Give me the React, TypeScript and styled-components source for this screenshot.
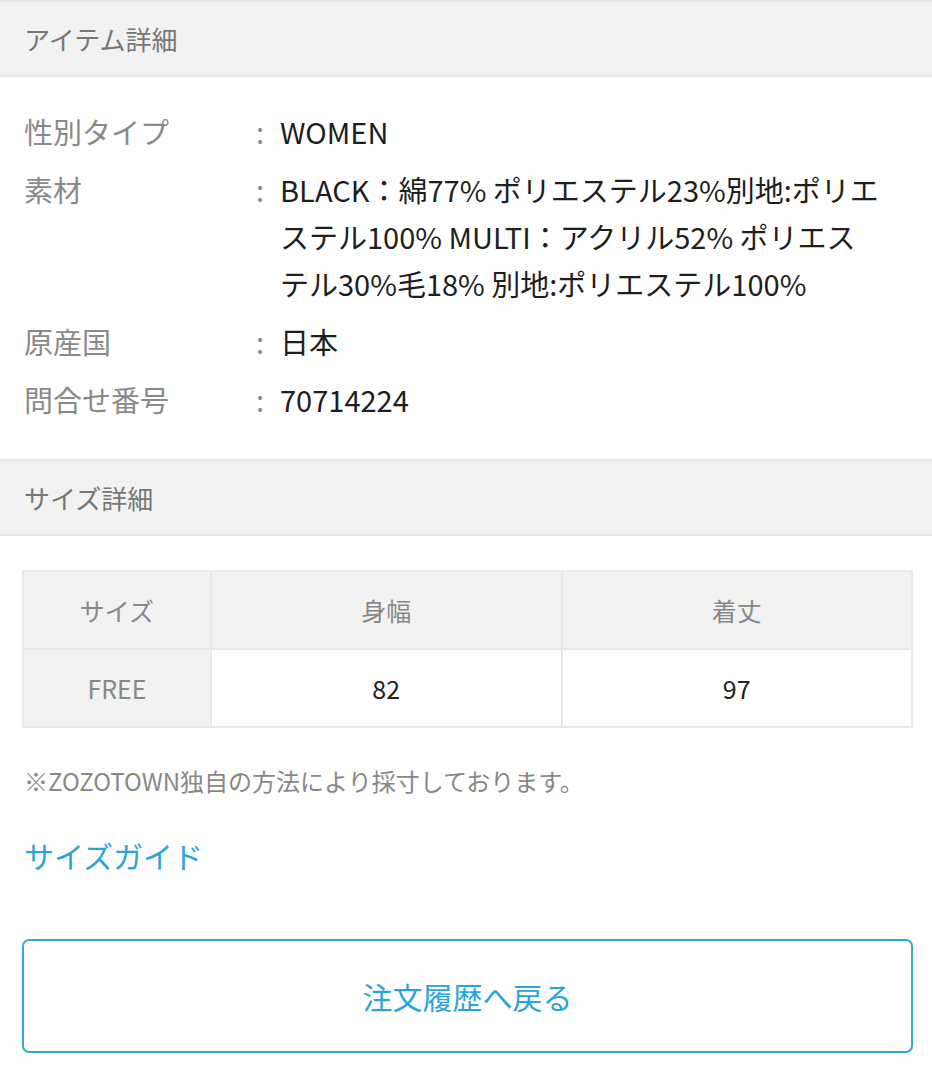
import React from "react";
import styled, { createGlobalStyle } from "styled-components";

const GlobalStyle = createGlobalStyle`
  body {
    margin: 0;
    background: #fff;
    font-family: "Noto Sans CJK JP", "Noto Sans", sans-serif;
  }
`;

const Page = styled.div`
  width: 932px;
  background: #fff;
`;

const SectionHead = styled.div`
  height: 77px;
  box-sizing: border-box;
  background: #f2f2f2;
  border-top: 2px solid #e6e6e6;
  border-bottom: 2px solid #e6e6e6;
  padding: 0 24px;
  display: flex;
  align-items: center;
  font-size: 26px;
  color: #777;
`;

const SpecList = styled.dl`
  margin: 0;
  padding: 31px 22px 36px 24px;
  display: grid;
  grid-template-columns: 232px 1fr;
  row-gap: 11px;
  font-size: 29px;
  line-height: 47px;
`;

const Label = styled.dt`
  color: #8a8a8a;
`;

const Value = styled.dd`
  margin: 0;
  color: #1e1e1e;
  display: flex;
`;

const Colon = styled.span`
  color: #8a8a8a;
  width: 24px;
  flex: none;
`;

const Line = styled.span`
  display: block;
  white-space: nowrap;
`;

const Body = styled.div`
  padding: 34px 19px 0 22px;
`;

const SizeTable = styled.table`
  width: 100%;
  border-collapse: collapse;
  font-size: 25px;
  text-align: center;
`;

const Cell = styled.td<{ $head?: boolean }>`
  border: 2px solid #e8e8e8;
  height: 76px;
  padding: 0;
  background: ${(p) => (p.$head ? "#f2f2f2" : "#fff")};
  color: ${(p) => (p.$head ? "#888" : "#222")};
`;

const Note = styled.p`
  margin: 35px 0 0 2px;
  font-size: 24px;
  color: #888;
`;

const GuideLink = styled.a`
  display: inline-block;
  margin: 35px 0 0 2px;
  font-size: 30px;
  color: #2ba4d9;
  text-decoration: none;
`;

const BackButton = styled.button`
  display: block;
  width: 100%;
  height: 114px;
  margin-top: 62px;
  border: 2px solid #35a9dc;
  border-radius: 7px;
  background: #fff;
  font-family: inherit;
  font-size: 30px;
  color: #2ba4d9;
`;

const specs: [string, string[]][] = [
  ["性別タイプ", ["WOMEN"]],
  [
    "素材",
    [
      "BLACK：綿77% ポリエステル23%別地:ポリエ",
      "ステル100% MULTI：アクリル52% ポリエス",
      "テル30%毛18% 別地:ポリエステル100%",
    ],
  ],
  ["原産国", ["日本"]],
  ["問合せ番号", ["70714224"]],
];

export default function App() {
  return (
    <Page>
      <GlobalStyle />
      <SectionHead>アイテム詳細</SectionHead>
      <SpecList>
        {specs.map(([k, lines]) => (
          <React.Fragment key={k}>
            <Label>{k}</Label>
            <Value>
              <Colon>:</Colon>
              <span>
                {lines.map((l) => (
                  <Line key={l}>{l}</Line>
                ))}
              </span>
            </Value>
          </React.Fragment>
        ))}
      </SpecList>
      <SectionHead>サイズ詳細</SectionHead>
      <Body>
        <SizeTable>
          <colgroup>
            <col style={{ width: 188 }} />
            <col />
            <col />
          </colgroup>
          <tbody>
            <tr>
              <Cell $head>サイズ</Cell>
              <Cell $head>身幅</Cell>
              <Cell $head>着丈</Cell>
            </tr>
            <tr>
              <Cell $head>FREE</Cell>
              <Cell>82</Cell>
              <Cell>97</Cell>
            </tr>
          </tbody>
        </SizeTable>
        <Note>※ZOZOTOWN独自の方法により採寸しております。</Note>
        <GuideLink href="#">サイズガイド</GuideLink>
        <BackButton>注文履歴へ戻る</BackButton>
      </Body>
    </Page>
  );
}
